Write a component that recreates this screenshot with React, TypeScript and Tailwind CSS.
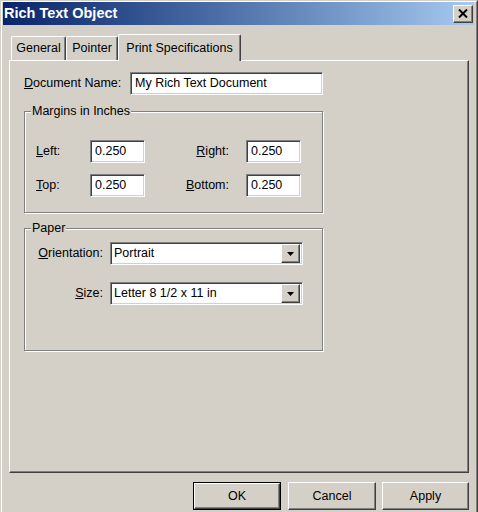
import React from 'react';

const sunken =
    'bg-white border border-t-[#808080] border-l-[#808080] border-b-white border-r-white shadow-[inset_1px_1px_0_#404040,inset_-1px_-1px_0_#d4d0c8]';
const raised =
    'bg-[#d4d0c8] border border-t-white border-l-white border-b-[#404040] border-r-[#404040] shadow-[inset_-1px_-1px_0_#808080]';

function TextBox({ value, width }: { value: string; width: string }) {
    return (
        <div className={`${sunken} ${width} h-[23px] pl-[4px] flex items-center`}>
            <span>{value}</span>
        </div>
    );
}

function Combo({ value }: { value: string }) {
    return (
        <div className={`${sunken} w-[193px] h-[23px] pl-[3px] pr-[2px] flex items-center`}>
            <span className="flex-1">{value}</span>
            <div className={`${raised} w-[19px] h-[19px] flex items-center justify-center`}>
                <svg width="7" height="4" viewBox="0 0 7 4">
                    <polygon points="0,0 7,0 3.5,4" fill="#000" />
                </svg>
            </div>
        </div>
    );
}

function Tab({ label, width, active }: { label: string; width: string; active?: boolean }) {
    return (
        <div
            className={`${width} flex items-center justify-center rounded-t-[2px] bg-[#d4d0c8] border-t border-l border-r border-t-white border-l-white border-r-[#404040] shadow-[inset_-1px_0_0_#808080] ${
                active ? 'h-[27px] -mb-[1px] relative z-10' : 'h-[24px]'
            }`}
        >
            {label}
        </div>
    );
}

function Group({ title, children }: { title: string; children: React.ReactNode }) {
    return (
        <fieldset className="w-[299px] border border-[#808080] shadow-[1px_1px_0_#fff,inset_1px_1px_0_#fff]">
            <legend className="ml-[6px] px-[1px] leading-[15px] bg-[#d4d0c8]">{title}</legend>
            {children}
        </fieldset>
    );
}

function Button({ label, width, isDefault }: { label: string; width: string; isDefault?: boolean }) {
    return (
        <div className={`${width} h-[28px] ${isDefault ? 'border border-black' : ''}`}>
            <div className={`${raised} w-full h-full flex items-center justify-center`}>{label}</div>
        </div>
    );
}

export default function App() {
    return (
        <div className="w-[478px] h-[512px] overflow-hidden bg-[#d4d0c8] text-black text-[12.5px] font-['Liberation_Sans',Arial,sans-serif] border-l border-t border-r border-l-[#d4d0c8] border-t-[#d4d0c8] border-r-[#404040]">
            <div className="h-full border-l border-t border-r border-l-white border-t-white border-r-[#808080] pl-[1px] pr-[2px]">
                {/* --- TITLE BAR --- */}
                <div className="h-[23px] flex items-center justify-between bg-linear-to-r from-[#0a246a] to-[#a6caf0]">
                    <span className="pl-[1px] text-white font-bold text-[14.5px]">Rich Text Object</span>
                    <div className={`${raised} w-[20px] h-[18px] mr-[1px] flex items-center justify-center`}>
                        <svg width="10" height="9" viewBox="0 0 10 9">
                            <path d="M1 0.5 L9 8.5 M9 0.5 L1 8.5" stroke="#000" strokeWidth="2" />
                        </svg>
                    </div>
                </div>

                {/* --- TABS --- */}
                <div className="mt-[9px] ml-[6px] pl-[2px] h-[26px] flex items-end">
                    <Tab label="General" width="w-[55px]" />
                    <Tab label="Pointer" width="w-[52px]" />
                    <Tab label="Print Specifications" width="w-[123px]" active />
                </div>

                {/* --- TAB PANEL --- */}
                <div className="ml-[6px] w-[460px] h-[413px] border-t border-l border-r border-b border-t-white border-l-white border-r-[#404040] border-b-[#404040] shadow-[inset_-1px_-1px_0_#808080] pl-[14px] pt-[11px]">
                    <div className="flex items-center">
                        <span className="w-[106px]">
                            <u>D</u>ocument Name:
                        </span>
                        <TextBox value="My Rich Text Document" width="w-[193px]" />
                    </div>

                    <div className="mt-[9px]">
                        <Group title="Margins in Inches">
                            <div className="pt-[21px] pb-[15px]">
                                <div className="flex items-center">
                                    <span className="w-[65px] pl-[11px]">
                                        <u>L</u>eft:
                                    </span>
                                    <TextBox value="0.250" width="w-[55px]" />
                                    <span className="w-[101px] pr-[17px] text-right">
                                        <u>R</u>ight:
                                    </span>
                                    <TextBox value="0.250" width="w-[55px]" />
                                </div>
                                <div className="flex items-center mt-[11px]">
                                    <span className="w-[65px] pl-[11px]">
                                        <u>T</u>op:
                                    </span>
                                    <TextBox value="0.250" width="w-[55px]" />
                                    <span className="w-[101px] pr-[17px] text-right">
                                        <u>B</u>ottom:
                                    </span>
                                    <TextBox value="0.250" width="w-[55px]" />
                                </div>
                            </div>
                        </Group>
                    </div>

                    <div className="mt-[8px]">
                        <Group title="Paper">
                            <div className="pt-[6px] pb-[45px]">
                                <div className="flex items-center">
                                    <span className="w-[85px] pr-[7px] text-right">
                                        <u>O</u>rientation:
                                    </span>
                                    <Combo value="Portrait" />
                                </div>
                                <div className="flex items-center mt-[17px]">
                                    <span className="w-[85px] pr-[7px] text-right">
                                        <u>S</u>ize:
                                    </span>
                                    <Combo value="Letter 8 1/2 x 11 in" />
                                </div>
                            </div>
                        </Group>
                    </div>
                </div>

                {/* --- DIALOG BUTTONS --- */}
                <div className="mt-[9px] pr-[5px] flex justify-end">
                    <Button label="OK" width="w-[88px]" isDefault />
                    <Button label="Cancel" width="w-[88px] ml-[7px]" />
                    <Button label="Apply" width="w-[87px] ml-[6px]" />
                </div>
            </div>
        </div>
    );
}
